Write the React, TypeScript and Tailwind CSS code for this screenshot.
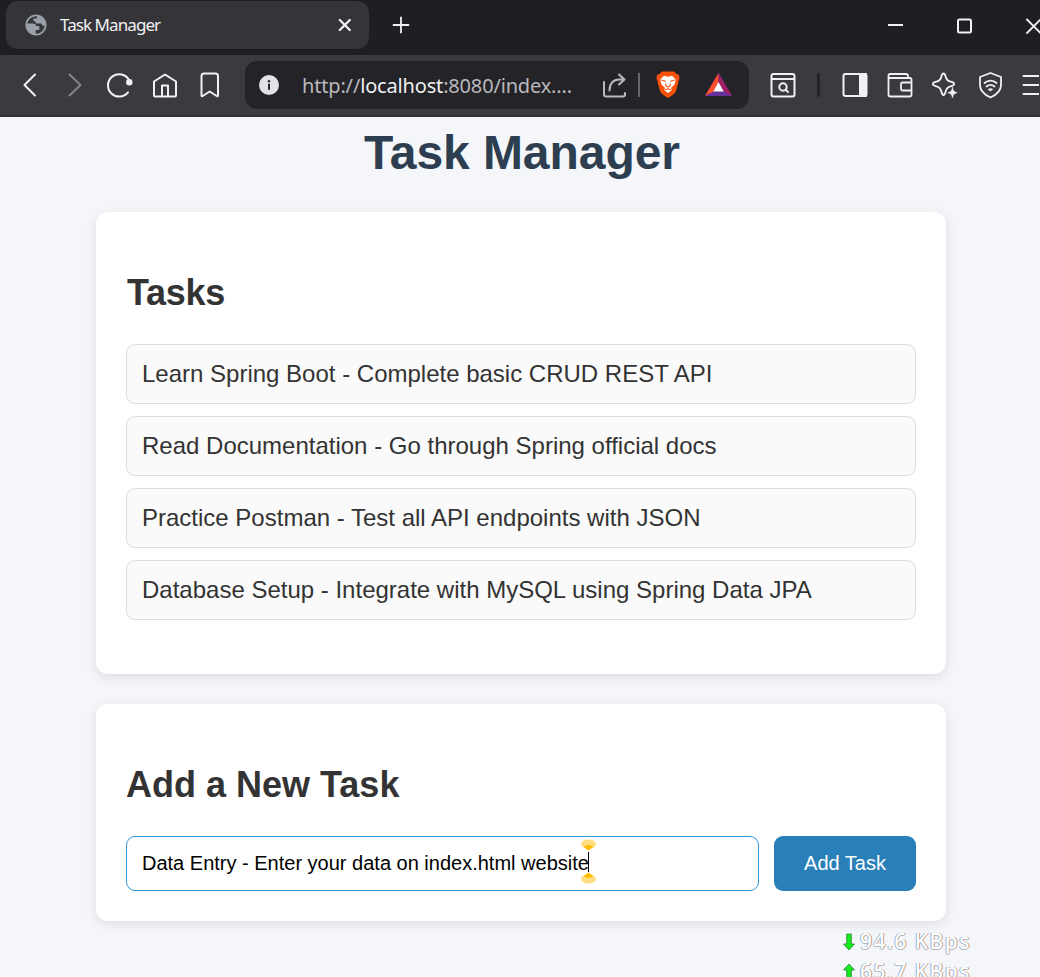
import type { ReactNode } from "react";

function Icon({ w, className = "", children }: { w: number; className?: string; children: ReactNode }) {
  return (
    <svg
      width={w}
      height={32}
      viewBox={`0 0 ${w} 32`}
      fill="none"
      stroke="currentColor"
      strokeWidth="2"
      strokeLinecap="round"
      strokeLinejoin="round"
      className={`block shrink-0 ${className}`}
    >
      {children}
    </svg>
  );
}

function TitleBar() {
  return (
    <div className="flex h-[55px] items-start bg-[#1f1e23] pl-1.5 pt-px text-[#f1f1f4]">
      <div className="flex h-12 w-[363px] shrink-0 items-center rounded-xl bg-[#353438]">
        <Icon w={24} className="ml-[18px]">
          <circle cx="12" cy="16" r="9.7" fill="#37363a" stroke="#9aa0a9" strokeWidth="1.8" />
          <path d="M13 6.500c4.500.3 8.500 4 8.500 9l-1.500 1.500c-1.500-.2-2-1-2.500-2.500h-4.500c-1.500 0-2-1-1.800-2.500h-1.700v-2.500h3.500z" fill="#9aa0a9" stroke="none" />
          <path d="M3 14.500h5.500c2.500 0 3.500 1 3.800 2.500h3v4h-3.500v4.800C6.500 25.500 2.500 21.500 3 14.500z" fill="#9aa0a9" stroke="none" />
        </Icon>
        <span className="ml-3 w-[270px] whitespace-nowrap font-['Noto_Sans',sans-serif] text-[17px] tracking-[-0.93px]">Task Manager</span>
        <Icon w={24} className="ml-[3px]">
          <path d="M6.8 11l10 10M16.8 11l-10 10" strokeWidth="2.3" />
        </Icon>
      </div>
      <div className="flex h-12 items-center">
        <Icon w={24} className="ml-5">
          <path d="M12 8.5v15M4.500 16h15" strokeWidth="1.8" />
        </Icon>
        <Icon w={24} className="ml-[470px]">
          <path d="M5 16h15" strokeLinecap="butt" />
        </Icon>
        <Icon w={24} className="ml-[45px]">
          <rect x="6" y="10.500" width="13" height="13" rx="1.5" />
        </Icon>
        <Icon w={24} className="ml-[45px]">
          <path d="M6 10.500l13.500 13.500M19.500 10.500L6 24" strokeWidth="1.8" />
        </Icon>
      </div>
    </div>
  );
}

function AddressBar() {
  return (
    <div className="ml-3 flex h-12 w-[504px] shrink-0 items-center rounded-xl bg-[#242328]">
      <Icon w={24} className="ml-3">
        <circle cx="12" cy="16" r="10" fill="#e3e2e8" stroke="none" />
        <path d="M12 14.800v6" stroke="#242328" strokeLinecap="butt" strokeWidth="2" />
        <circle cx="12" cy="12.300" r="1.200" fill="#242328" stroke="none" />
      </Icon>
      <span className="ml-[21px] w-[291px] whitespace-nowrap pt-0.5 font-['Noto_Sans',sans-serif] text-[20px] tracking-[-0.17px] text-[#b9b9bd]">
        http://<span className="text-[#f0f0f3]">localhost</span>:8080/index....
      </span>
      <Icon w={40} className="text-[#b9b9bd]">
        <path d="M11 13v12.500a2 2 0 002 2h17a2 2 0 002-2V24M16.500 21.500c0-7 4-11 9.500-11h5M26 5.500l5.500 5-5.500 5" />
      </Icon>
      <div className="ml-[5px] h-6 w-0.5 bg-[#67666b]" />
      <Icon w={24} className="ml-4">
        <path d="M6 2.500h12l2.500 2.500L23 6l.5 3.500-.8 2-2.500 10c-.5 2-2 3.200-4 4.700L12 29l-4.200-2.800c-2-1.500-3.500-2.700-4-4.700L1.300 11.500.5 9.500 1 6l2.500-1z" fill="#ff5208" stroke="none" />
        <path d="M8 6.800l4 .9 4-.9 3.800 3.700-1.100 4.800-3.700 3.600.8 2.400-3.800 2.800-3.800-2.800.8-2.400-3.700-3.600-1.100-4.800z" fill="#fff" stroke="none" />
        <path d="M5.500 11l4 1.200M18.500 11l-4 1.200M9.500 15l.8 2.200 1.700.8 1.700-.8.8-2.200M9.500 20.800l2.500-1 2.500 1" stroke="#ff5208" strokeWidth="1.1" />
      </Icon>
      <Icon w={30} className="ml-6">
        <path d="M14.500 4L1 27h27z" fill="#66309c" stroke="none" />
        <path d="M14.500 4L1 27l8.500-4.500 5-9z" fill="#ff4e28" stroke="none" />
        <path d="M14.500 4L28 27l-8.500-4.500-5-9z" fill="#9e1f63" stroke="none" />
        <path d="M14.500 13L9.300 22.500h10.400z" fill="#fff" stroke="none" />
      </Icon>
    </div>
  );
}

function Toolbar() {
  return (
    <div className="flex h-[62px] items-center border-b-2 border-[#302f34] bg-[#3b3a3f] pl-2 text-[#f1f1f4]">
      <Icon w={45}>
        <path d="M27 5.500L16.500 16 27 26.500" />
      </Icon>
      <Icon w={45} className="text-[#85848a]">
        <path d="M16.500 5.500L27.500 16 16.500 26.500" />
      </Icon>
      <Icon w={45}>
        <path d="M31 11A11.200 11.200 0 1030 23.300" />
        <circle cx="31.300" cy="13.200" r="3.200" fill="currentColor" stroke="none" />
      </Icon>
      <Icon w={45}>
        <path d="M11 12.500L22 5.500l11 7v14a1 1 0 01-1 1H12a1 1 0 01-1-1zM19 27.500v-11h6v11" />
      </Icon>
      <Icon w={45}>
        <path d="M13.500 7A2.500 2.500 0 0116 4.500h11.500A2.500 2.500 0 0130 7v19.500q0 1.300-1.300.5l-7-4.500-7 4.500q-1.200.8-1.200-.5z" />
      </Icon>
      <AddressBar />
      <Icon w={26} className="ml-[21px]">
        <rect x="1.500" y="5" width="23" height="22.500" rx="2" />
        <path d="M2 10h22" />
        <circle cx="13" cy="18" r="3.700" />
        <path d="M15.700 20.700l2.300 2.300" />
      </Icon>
      <div className="ml-[21px] h-6 w-[3px] rounded-full bg-[#242328]" />
      <Icon w={28} className="ml-5">
        <rect x="3.500" y="5" width="23" height="22" rx="2" />
        <path d="M20 5h6v22h-6z" fill="currentColor" />
      </Icon>
      <Icon w={28} className="ml-[17px]">
        <path d="M3.500 7.500v18a2 2 0 002 2h19a2 2 0 002-2V10.500A1.500 1.500 0 0025 9H4.500M3.500 8V6.500A1.500 1.500 0 015 5h16a2 2 0 012 2v2M26.500 13.500h-9A1.500 1.500 0 0016 15v5a1.500 1.500 0 001.500 1.500h9" strokeWidth="1.800" />
      </Icon>
      <Icon w={28} className="ml-[17px]">
        <path d="M13.500 4.500c1.200 0 1.700 1 2.200 3.200.6 2.800 1.800 4.200 5 5 2.300.6 3.500 1 3.500 2.300s-1.200 1.700-3.500 2.300c-3.200.8-4.400 2.200-5 5-.5 2.300-1 3.700-2.200 3.700s-1.700-1.400-2.200-3.700c-.6-2.800-1.800-4.200-5-5-2.300-.6-3.500-1-3.500-2.300s1.200-1.700 3.500-2.300c3.200-.8 4.400-2.200 5-5 .5-2.200 1-3.200 2.200-3.200z" strokeWidth="1.800" />
        <path d="M22.500 18.500c.8 3.600 1.500 4.300 4.700 5.200-3.200.8-3.900 1.500-4.700 5.100-.8-3.600-1.500-4.300-4.700-5.100 3.200-.9 3.900-1.600 4.700-5.200z" fill="currentColor" stroke="currentColor" strokeWidth=".6" />
      </Icon>
      <Icon w={28} className="ml-[18px]">
        <path d="M14.500 4l10.500 4v8c0 6-5 10-10.500 12.500C9 26 4 22 4 16V8z" strokeWidth="1.800" />
        <path d="M8.500 14c3.500-3.200 8.500-3.200 12 0M10.500 17.500c2.500-2 5.500-2 8 0" strokeWidth="1.800" />
        <path d="M12.200 20.300q2.300-1.600 4.600 0L14.500 22z" fill="currentColor" strokeWidth=".6" />
      </Icon>
      <Icon w={18} className="ml-[17px]">
        <path d="M2.500 7H22M2.500 16H22M2.500 25H22" />
      </Icon>
    </div>
  );
}

const tasks = [
  "Learn Spring Boot - Complete basic CRUD REST API",
  "Read Documentation - Go through Spring official docs",
  "Practice Postman - Test all API endpoints with JSON",
  "Database Setup - Integrate with MySQL using Spring Data JPA",
];

function CaretHandle({ flipped = false }: { flipped?: boolean }) {
  return (
    <svg width="16" height="12" viewBox="0 0 16 12" className={flipped ? "block rotate-180" : "block"}>
      <ellipse cx="7.500" cy="5" rx="7.500" ry="4.600" fill="#ffdd80" />
      <path d="M2.700 8Q7.500 4.200 12.300 8L7.500 11.500z" fill="#ffbc00" />
    </svg>
  );
}

function Speed({ up = false, value }: { up?: boolean; value: string }) {
  return (
    <div className="flex h-[30px] items-center">
      <svg width="12" height="18" viewBox="0 0 12 18" className={up ? "block rotate-180" : "block"}>
        <path d="M3.700 1h4.600v10h3.200L6 17 .5 11h3.200z" fill="#12ed1b" stroke="#27833a" strokeWidth=".8" />
      </svg>
      <span className="-mt-0.5 ml-[5px] whitespace-nowrap font-['Noto_Sans',sans-serif] text-[21px] font-medium leading-[30px] tracking-[1.5px] text-white [text-shadow:-1px_0_0_#8fb4e0,1px_0_0_#c79c7c,0_1px_0_#b3b6c0]">
        {value} KBps
      </span>
    </div>
  );
}

export default function App() {
  return (
    <div className="relative h-[977px] w-[1040px] overflow-hidden bg-[#f4f6f9] font-['Liberation_Sans',Arial,sans-serif] text-[#333333]">
      <TitleBar />
      <Toolbar />
      <main className="flex flex-col">
        <h1 className="mt-2 h-[87px] pl-1 text-center text-[48px] font-bold leading-[56px] tracking-[-0.06px] text-[#2c3e50]">Task Manager</h1>
        <section className="ml-24 h-[462px] w-[850px] rounded-xl bg-white px-[30px] pt-[60px] shadow-[0_3px_12px_rgba(0,0,0,0.1)]">
          <h2 className="h-[72px] pl-px text-[36px] font-bold leading-[41px] tracking-[-0.3px]">Tasks</h2>
          <ul className="flex flex-col gap-3">
            {tasks.map((task) => (
              <li key={task} className="flex h-[60px] items-center rounded-[9px] border border-[#dddddd] bg-[#fafafa] px-[15px] pb-0.5 text-[24px] leading-[27px]">
                {task}
              </li>
            ))}
          </ul>
        </section>
        <section className="ml-24 mt-[30px] h-[217px] w-[850px] rounded-xl bg-white px-[30px] pt-[60px] shadow-[0_3px_12px_rgba(0,0,0,0.1)]">
          <h2 className="h-[72px] text-[36px] font-bold leading-[41px]">Add a New Task</h2>
          <div className="flex gap-[15px]">
            <div className="relative flex h-[55px] w-[633px] items-center whitespace-nowrap rounded-[9px] border border-[#3498db] bg-white pb-0.5 pl-[15px] text-[20px] text-black">
              <span>Data Entry - Enter your data on index.html website</span>
              <div className="absolute left-[454px] top-[2px] flex flex-col">
                <CaretHandle />
                <div className="ml-[7px] mt-px h-5 w-px bg-black" />
                <div className="-ml-px">
                  <CaretHandle flipped />
                </div>
              </div>
            </div>
            <button className="h-[55px] w-[142px] rounded-[9px] bg-[#2980b9] pb-0.5 text-[20px] text-white">Add Task</button>
          </div>
        </section>
      </main>
      <div className="absolute left-[843px] top-[927px]">
        <Speed value="94.6" />
        <Speed up value="65.7" />
      </div>
    </div>
  );
}
